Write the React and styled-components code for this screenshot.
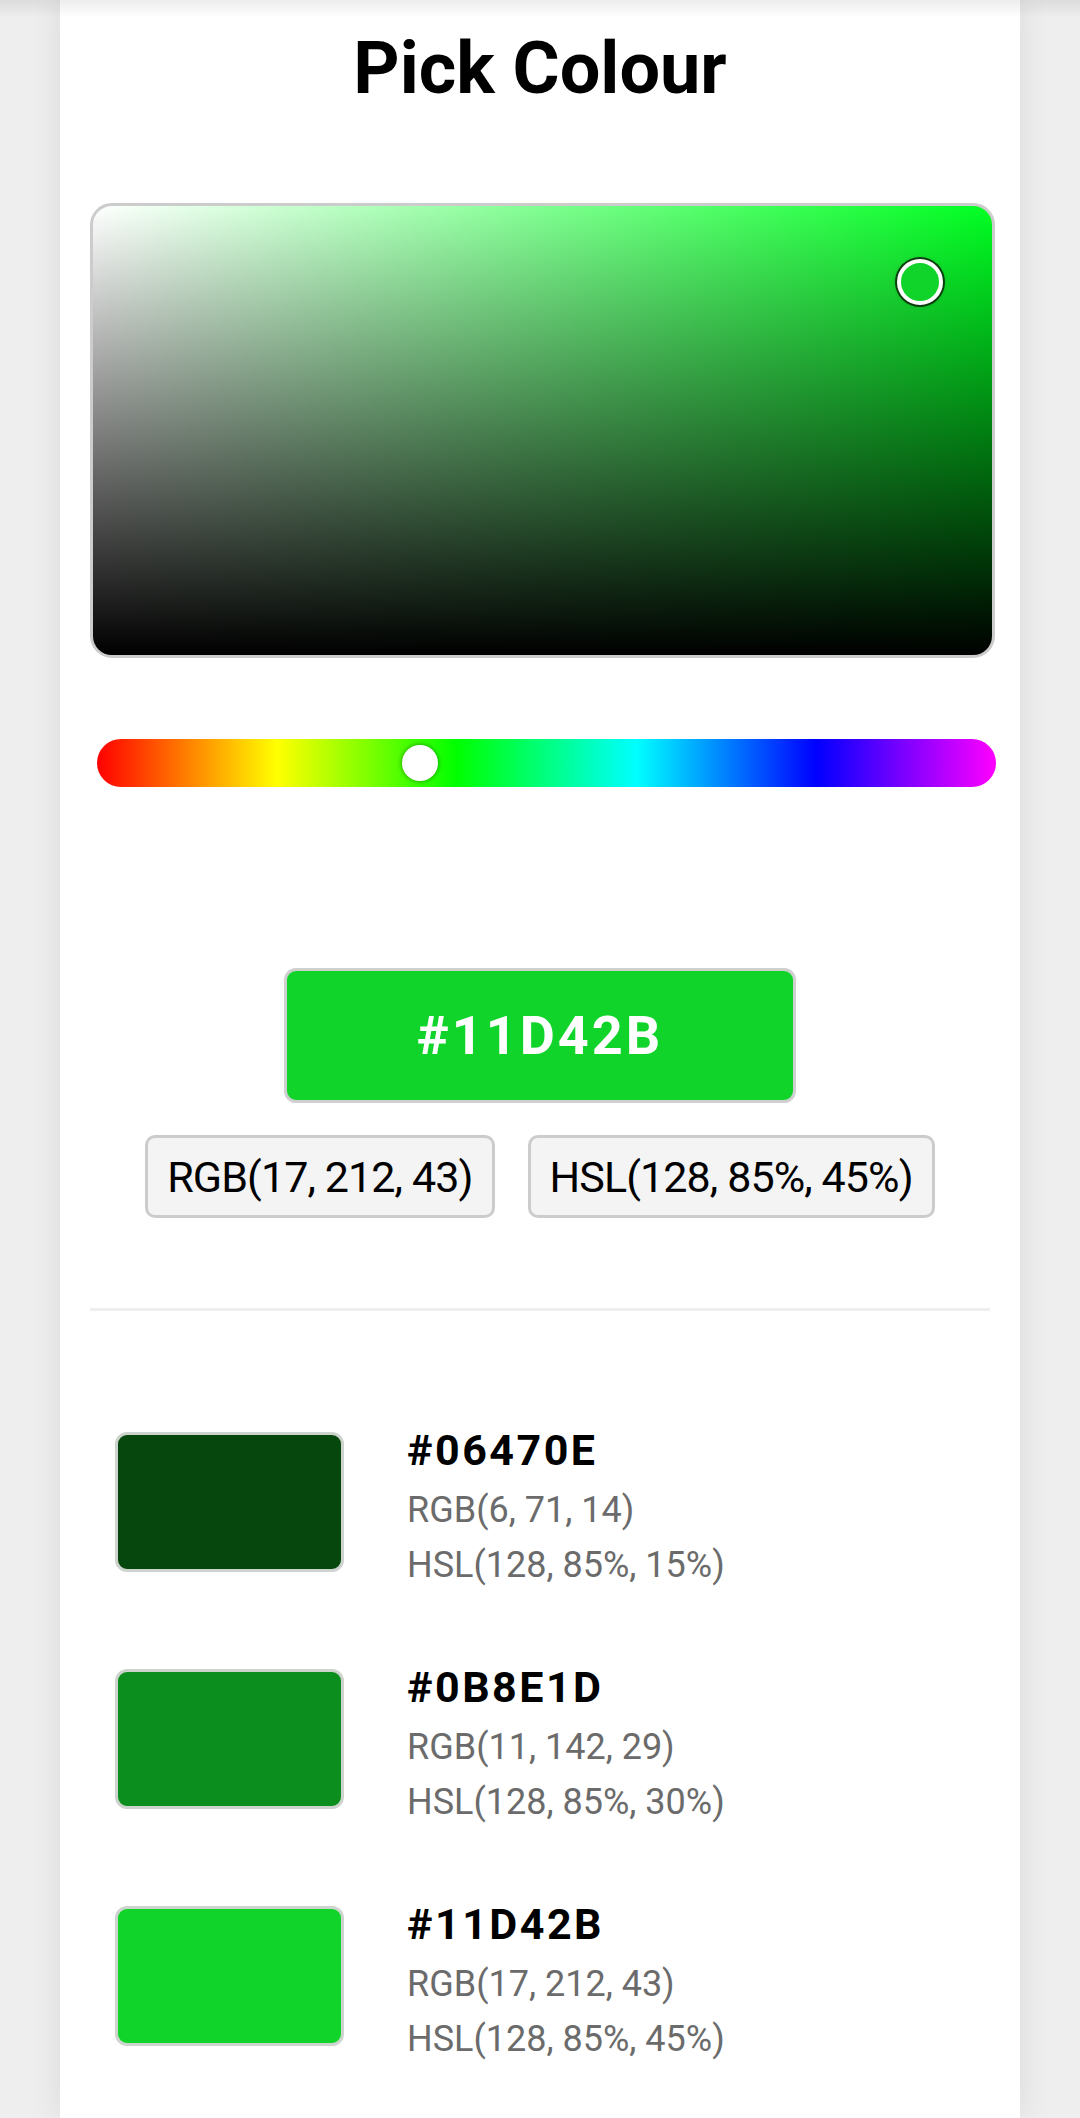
import React from "react";
import styled, { createGlobalStyle } from "styled-components";

const Global = createGlobalStyle`
  html, body {
    margin: 0;
    padding: 0;
    background: #eeeeee;
    font-family: Roboto, "Noto Sans", "Liberation Sans", sans-serif;
  }
  * { box-sizing: border-box; }
`;

const TopShade = styled.div`
  position: fixed;
  left: 0;
  right: 0;
  top: 0;
  height: 18px;
  background: linear-gradient(rgba(0, 0, 0, 0.07), rgba(0, 0, 0, 0));
  pointer-events: none;
  z-index: 5;
`;

const Card = styled.main`
  width: 960px;
  min-height: 2118px;
  margin: 0 auto;
  background: #ffffff;
  box-shadow: 0 0 30px rgba(0, 0, 0, 0.09);
  padding: 27px 30px 40px;
  display: flex;
  flex-direction: column;
`;

const Title = styled.h1`
  margin: 0;
  font-size: 72px;
  line-height: 84px;
  font-weight: 700;
  text-align: center;
  color: #000;
`;

const SVBox = styled.div`
  position: relative;
  margin-top: 92px;
  width: 905px;
  height: 455px;
  border: 3px solid #cccccc;
  border-radius: 22px;
  background:
    linear-gradient(to top, #000 0%, rgba(0, 0, 0, 0) 100%),
    linear-gradient(to right, #fff 0%, rgba(255, 255, 255, 0) 100%),
    ${(p) => p.$hue};
`;

const SVCursor = styled.div`
  position: absolute;
  width: 46px;
  height: 46px;
  margin: -23px 0 0 -23px;
  border-radius: 50%;
  border: 4px solid #ffffff;
  background: ${(p) => p.$color};
  box-shadow: 0 0 0 2px rgba(10, 40, 10, 0.85), 0 0 4px rgba(0, 0, 0, 0.4);
`;

const HueTrack = styled.div`
  position: relative;
  margin-top: 81px;
  margin-left: 7px;
  width: 899px;
  height: 48px;
  border-radius: 24px;
  background: linear-gradient(
    to right,
    #ff0000 0%,
    #ffff00 20%,
    #00ff00 40%,
    #00ffff 60%,
    #0000ff 80%,
    #ff00ff 100%
  );
`;

const HueThumb = styled.div`
  position: absolute;
  top: 50%;
  width: 36px;
  height: 36px;
  margin: -18px 0 0 -18px;
  border-radius: 50%;
  background: #ffffff;
  box-shadow: 0 0 5px rgba(0, 0, 0, 0.45);
`;

const HexButton = styled.div`
  align-self: center;
  margin-top: 181px;
  width: 512px;
  height: 135px;
  border: 3px solid #cfcfcf;
  border-radius: 12px;
  background: ${(p) => p.$color};
  color: #ffffff;
  font-size: 54px;
  font-weight: 700;
  letter-spacing: 3px;
  display: flex;
  align-items: center;
  justify-content: center;
`;

const ChipRow = styled.div`
  align-self: center;
  margin-top: 32px;
  display: flex;
  gap: 33px;
`;

const Chip = styled.div`
  height: 83px;
  padding: 0 19px;
  border: 3px solid #cccccc;
  border-radius: 10px;
  background: #f4f4f4;
  color: #000;
  font-size: 43px;
  letter-spacing: -0.9px;
  display: flex;
  align-items: center;
`;

const Divider = styled.hr`
  margin: 90px 0 0;
  border: none;
  height: 3px;
  background: #eeeeee;
`;

const List = styled.div`
  padding-top: 106px;
  display: flex;
  flex-direction: column;
  gap: 61px;
`;

const Row = styled.div`
  display: flex;
  align-items: flex-start;
  padding-left: 25px;
  gap: 63px;
`;

const Swatch = styled.div`
  width: 229px;
  height: 140px;
  margin-top: 15px;
  border: 3px solid #cdd3cd;
  border-radius: 12px;
  background: ${(p) => p.$color};
  flex-shrink: 0;
`;

const Info = styled.div`
  display: flex;
  flex-direction: column;
`;

const RowHex = styled.div`
  font-size: 43px;
  line-height: 66px;
  font-weight: 700;
  letter-spacing: 2.5px;
  color: #000;
`;

const RowSub = styled.div`
  font-size: 36px;
  line-height: 55px;
  color: #6b6b6b;
`;

const shades = [
  { hex: "#06470E", rgb: "RGB(6, 71, 14)", hsl: "HSL(128, 85%, 15%)" },
  { hex: "#0B8E1D", rgb: "RGB(11, 142, 29)", hsl: "HSL(128, 85%, 30%)" },
  { hex: "#11D42B", rgb: "RGB(17, 212, 43)", hsl: "HSL(128, 85%, 45%)" },
];

export default function App() {
  const color = "#11D42B";
  const hue = 128;
  const sat = 0.92;
  const val = 0.83;
  return (
    <>
      <Global />
      <TopShade />
      <Card>
        <Title>Pick Colour</Title>
        <SVBox $hue={`hsl(${hue}, 100%, 50%)`}>
          <SVCursor
            $color={color}
            style={{ left: `${sat * 100}%`, top: `${(1 - val) * 100}%` }}
          />
        </SVBox>
        <HueTrack>
          <HueThumb style={{ left: `${(hue / 360) * 100 + 0.4}%` }} />
        </HueTrack>
        <HexButton $color={color}>#11D42B</HexButton>
        <ChipRow>
          <Chip>RGB(17, 212, 43)</Chip>
          <Chip>HSL(128, 85%, 45%)</Chip>
        </ChipRow>
        <Divider />
        <List>
          {shades.map((s) => (
            <Row key={s.hex}>
              <Swatch $color={s.hex} />
              <Info>
                <RowHex>{s.hex}</RowHex>
                <RowSub>{s.rgb}</RowSub>
                <RowSub>{s.hsl}</RowSub>
              </Info>
            </Row>
          ))}
        </List>
      </Card>
    </>
  );
}
